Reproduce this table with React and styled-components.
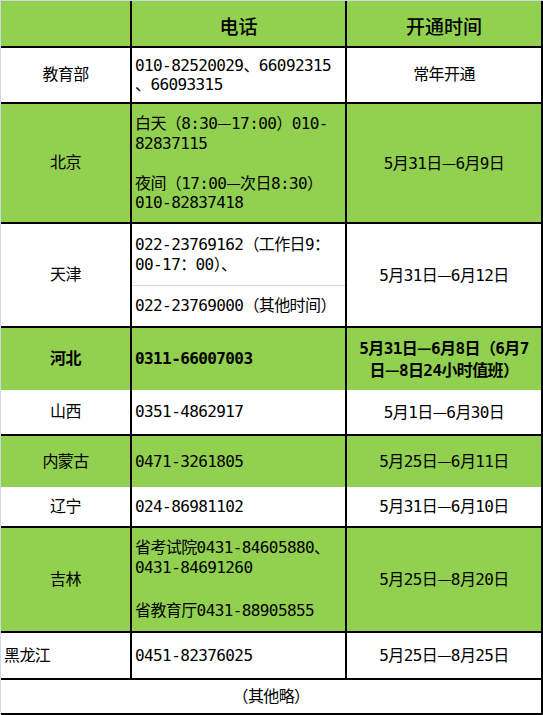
import React from "react";
import styled, { createGlobalStyle } from "styled-components";

const GREEN = "#92d050";
const GRID = "#d0d7e5";

const GlobalStyle = createGlobalStyle`
  body {
    margin: 0;
    background: #fff;
  }
`;

const Sheet = styled.div`
  width: 543px;
  box-sizing: border-box;
  border-top: 1px solid ${GRID};
  border-left: 1px solid ${GRID};
  font-family: "DejaVu Sans Mono", "Noto Sans CJK SC", monospace;
  font-size: 16px;
  letter-spacing: -0.6px;
  line-height: 19.5px;
  color: #000;
`;

const Row = styled.div`
  display: grid;
  grid-template-columns: ${(p) => (p.$full ? "1fr" : "131px 215px 196px")};
  box-sizing: border-box;
  height: ${(p) => p.$h}px;
  background: ${(p) => (p.$green ? GREEN : "#fff")};
  border-bottom: ${(p) => (p.$line ? "2px solid #000" : "none")};
`;

const Cell = styled.div`
  display: flex;
  flex-direction: column;
  justify-content: center;
  align-items: ${(p) => (p.$left ? "flex-start" : "center")};
  text-align: ${(p) => (p.$left ? "left" : "center")};
  box-sizing: border-box;
  min-width: 0;
  padding: 0 3px;
  border-right: 2px solid #000;
  font-weight: ${(p) => (p.$bold ? 700 : 400)};
  line-height: ${(p) => (p.$bold ? "20.5px" : "inherit")};
  white-space: nowrap;
`;

const HeadCell = styled(Cell)`
  padding-top: 4px;
  font-family: "Noto Sans CJK SC", sans-serif;
  font-size: 19px;
  font-weight: 500;
  letter-spacing: 0;
`;

const SplitCell = styled.div`
  display: flex;
  flex-direction: column;
  border-right: 2px solid #000;
`;

const SubCell = styled.div`
  display: flex;
  flex-direction: column;
  justify-content: center;
  box-sizing: border-box;
  padding: 0 3px;
  white-space: nowrap;
  ${(p) => (p.$h ? `height: ${p.$h}px; border-bottom: 1px solid ${GRID};` : "flex: 1;")}
`;

const Line = styled.div``;

const Gap = styled.div`
  height: ${(p) => p.$h}px;
`;

const Dash = styled.span`
  font-family: "Noto Sans CJK SC", sans-serif;
`;

const Range = ({ from, to }) => (
  <Line>
    {from}
    <Dash>—</Dash>
    {to}
  </Line>
);

export default function App() {
  return (
    <>
      <GlobalStyle />
      <Sheet>
        <Row $h={47} $green $line>
          <HeadCell />
          <HeadCell>电话</HeadCell>
          <HeadCell>开通时间</HeadCell>
        </Row>

        <Row $h={56} $line>
          <Cell>教育部</Cell>
          <Cell $left>
            <Line>010-82520029、66092315</Line>
            <Line>、66093315</Line>
          </Cell>
          <Cell>常年开通</Cell>
        </Row>

        <Row $h={120} $green $line>
          <Cell>北京</Cell>
          <Cell $left>
            <Line>
              白天（8:30<Dash>—</Dash>17:00）010-
            </Line>
            <Line>82837115</Line>
            <Gap $h={19.5} />
            <Line>
              夜间（17:00<Dash>—</Dash>次日8:30）
            </Line>
            <Line>010-82837418</Line>
          </Cell>
          <Cell>
            <Range from="5月31日" to="6月9日" />
          </Cell>
        </Row>

        <Row $h={104} $line>
          <Cell>天津</Cell>
          <SplitCell>
            <SubCell $h={62}>
              <Line>022-23769162（工作日9：</Line>
              <Line>00-17：00）、</Line>
            </SubCell>
            <SubCell>
              <Line>022-23769000（其他时间）</Line>
            </SubCell>
          </SplitCell>
          <Cell>
            <Range from="5月31日" to="6月12日" />
          </Cell>
        </Row>

        <Row $h={62} $green>
          <Cell $bold>河北</Cell>
          <Cell $left $bold>
            0311-66007003
          </Cell>
          <Cell $bold>
            <Range from="5月31日" to="6月8日（6月7" />
            <Range from="日" to="8日24小时值班）" />
          </Cell>
        </Row>

        <Row $h={46} $line>
          <Cell>山西</Cell>
          <Cell $left>0351-4862917</Cell>
          <Cell>
            <Range from="5月1日" to="6月30日" />
          </Cell>
        </Row>

        <Row $h={51} $green>
          <Cell>内蒙古</Cell>
          <Cell $left>0471-3261805</Cell>
          <Cell>
            <Range from="5月25日" to="6月11日" />
          </Cell>
        </Row>

        <Row $h={41} $line>
          <Cell>辽宁</Cell>
          <Cell $left>024-86981102</Cell>
          <Cell>
            <Range from="5月31日" to="6月10日" />
          </Cell>
        </Row>

        <Row $h={105} $green $line>
          <Cell>吉林</Cell>
          <Cell $left>
            <Line>省考试院0431-84605880、</Line>
            <Line>0431-84691260</Line>
            <Gap $h={24} />
            <Line>省教育厅0431-88905855</Line>
          </Cell>
          <Cell>
            <Range from="5月25日" to="8月20日" />
          </Cell>
        </Row>

        <Row $h={47} $line>
          <Cell $left>黑龙江</Cell>
          <Cell $left>0451-82376025</Cell>
          <Cell>
            <Range from="5月25日" to="8月25日" />
          </Cell>
        </Row>

        <Row $h={35} $line $full>
          <Cell>（其他略）</Cell>
        </Row>
      </Sheet>
    </>
  );
}
